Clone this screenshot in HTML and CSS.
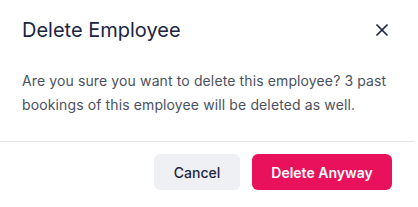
FILE: index.html
```html
<!DOCTYPE html>
<html>
<head>
<meta charset="utf-8">
<link rel="stylesheet" href="styles.css">
</head>
<body>
<div class="modal">
  <div class="header">
    <h2 class="title">Delete Employee</h2>
    <button class="close" aria-label="Close">
      <svg width="12" height="12" viewBox="0 0 12 12"><path d="M1 1L11 11M11 1L1 11" stroke="#1b2440" stroke-width="1.7" stroke-linecap="round"/></svg>
    </button>
  </div>
  <div class="body">
    <p class="text">Are you sure you want to delete this employee? 3 past bookings of this employee will be deleted as well.</p>
  </div>
  <div class="footer">
    <button class="btn btn-cancel">Cancel</button>
    <button class="btn btn-danger">Delete Anyway</button>
  </div>
</div>
</body>
</html>
```

FILE: styles.css
```css
* { box-sizing: border-box; }
html, body { margin: 0; padding: 0; background: #fff; }
body { font-family: Inter, "Noto Sans", sans-serif; }
.modal { width: 414px; background: #fff; }
.header {
  display: flex;
  align-items: center;
  justify-content: space-between;
  padding: 16px 26px 0 22px;
}
.title {
  margin: 0;
  font-size: 20px;
  line-height: 28px;
  font-weight: 400;
  color: #1b2440;
}
.close {
  border: 0;
  background: none;
  padding: 0;
  width: 12px;
  height: 12px;
  display: flex;
  cursor: pointer;
}
.body { padding: 25px 22px 24px 22px; }
.text {
  margin: 0;
  font-size: 14px;
  line-height: 24px;
  letter-spacing: 0.12px;
  color: #4b5160;
}
.footer {
  border-top: 1px solid #e6e7ea;
  display: flex;
  justify-content: flex-end;
  gap: 12px;
  padding: 12px 22px 17px 22px;
}
.btn {
  height: 36px;
  border: 0;
  border-radius: 6px;
  font-family: Inter, "Noto Sans", sans-serif;
  font-size: 14px;
  padding: 0 19px;
  cursor: pointer;
}
.btn-cancel {
  background: #eef0f4;
  color: #1e2740;
  font-weight: 500;
  width: 86px;
}
.btn-danger {
  background: #e9115b;
  color: #fff;
  font-weight: 600;
  width: 140px;
}
```
